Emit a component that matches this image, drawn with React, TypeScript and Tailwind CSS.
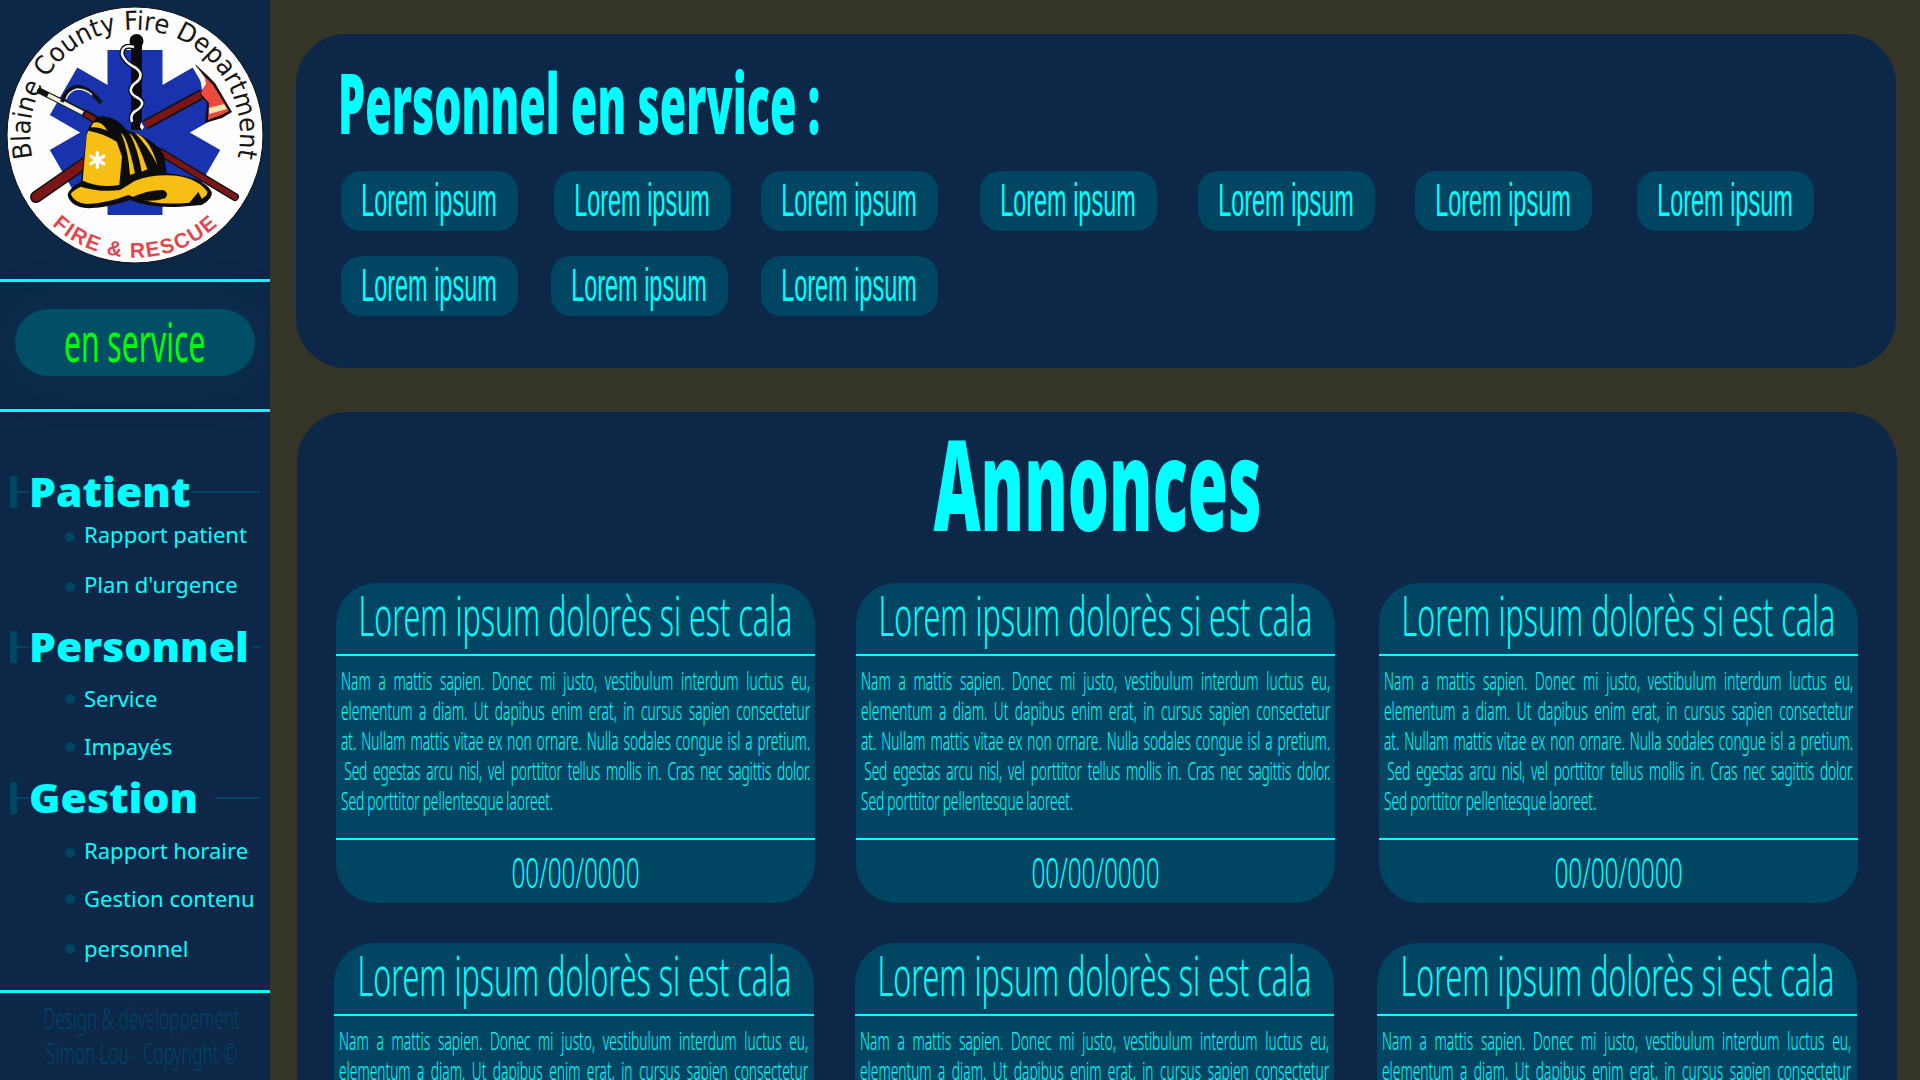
import React from "react";

function Logo() {
  return (
    <svg width="270" height="279" viewBox="0 0 270 279" className="block">
      <defs>
        <path id="arcTop" d="M32.6,158 A105,105 0 1 1 237.4,158" />
        <path id="arcBot" d="M52,225 A122,122 0 0 0 218,225" />
      </defs>
      <circle cx="135" cy="135" r="128" fill="#fdfdfd" stroke="#111" strokeWidth="1" />
      <text fontFamily="'DejaVu Sans', sans-serif" fontSize="26" fill="#161616">
        <textPath href="#arcTop" textLength="376" lengthAdjust="spacingAndGlyphs">Blaine County Fire Department</textPath>
      </text>
      <text fontFamily="'Liberation Sans', sans-serif" fontWeight="700" fontSize="21" fill="#e0474f">
        <textPath href="#arcBot" textLength="182" lengthAdjust="spacing">FIRE &amp; RESCUE</textPath>
      </text>
      <g fill="#1833ad">
        <rect x="107.5" y="50" width="55" height="165" />
        <rect x="107.5" y="50" width="55" height="165" transform="rotate(60 135 132.5)" />
        <rect x="107.5" y="50" width="55" height="165" transform="rotate(120 135 132.5)" />
      </g>
      {/* handles */}
      <path d="M145,125 L202,94" stroke="#111" strokeWidth="10" />
      <path d="M145,125 L202,94" stroke="#7c1616" strokeWidth="7" />
      <path d="M36,197 L85,163" stroke="#111" strokeWidth="12" strokeLinecap="round" />
      <path d="M36,197 L85,163" stroke="#7c1616" strokeWidth="9" strokeLinecap="round" />
      <path d="M160,152 L235,197" stroke="#111" strokeWidth="8" strokeLinecap="round" />
      <path d="M160,152 L235,197" stroke="#7c1616" strokeWidth="5.5" strokeLinecap="round" />
      {/* halligan */}
      <path d="M40,91 L84,113" stroke="#111" strokeWidth="6" strokeLinecap="round" />
      <path d="M48,95 L83,113" stroke="#f4efd6" strokeWidth="4" />
      <path d="M84,113 L103,124" stroke="#111" strokeWidth="8" />
      <path d="M85,114 L99,122" stroke="#7c1616" strokeWidth="4.5" />
      <path d="M62,102 Q66,89 76,87 Q88,86 101,103" fill="none" stroke="#111" strokeWidth="4" />
      <path d="M66,99 Q69,91 77,89 Q86,89 92,95" fill="none" stroke="#e8e8e8" strokeWidth="1.4" />
      {/* axe */}
      <path d="M195,64 L207,75 L215,83 L232,112 L222,118 L205,123 L207,103 L200,95 L205,83 Z" fill="#111" />
      <path d="M197,67 L205,82 L201,94 L209,103 L208,120 L221,115 L229,111 L213,85 L205,77 Z" fill="#ec4a3e" />
      <path d="M197,67 L205,78 L206,84 L202,90 L200,78 Z" fill="#f3f3f3" />
      <path d="M209,108 L224,104 L227,109 L209,114 Z" fill="#efe7b0" />
      {/* staff and snake */}
      <rect x="131" y="40" width="11" height="90" fill="#0b0b0b" />
      <circle cx="136.5" cy="41" r="7" fill="#0b0b0b" />
      <path d="M134,47 Q122,44 122,54 Q124,62 136,68 Q146,76 134,84 Q126,92 138,98 Q148,104 134,112 Q130,116 132,122" fill="none" stroke="#0b0b0b" strokeWidth="5" />
      <path d="M134,47 Q122,44 122,54 Q124,62 136,68 Q146,76 134,84 Q126,92 138,98 Q148,104 134,112 Q130,116 132,122" fill="none" stroke="#f4f4f4" strokeWidth="2.6" />
      <path d="M141,122 L144,127 L142,130 L140,127 Z" fill="#fff" />
      {/* helmet, drawn in 3x coordinates */}
      <g transform="translate(20 110) scale(0.33333)">
        <path d="M245,18 Q210,30 200,70 L183,215 Q145,235 143,255 Q150,290 205,295 Q270,292 330,270 Q390,295 480,290 L545,285 Q580,265 575,245 Q550,200 440,190 L432,135 Q410,90 320,60 Q290,20 245,18Z" fill="#0c0c0c" />
        <path d="M152,252 Q160,240 182,230 Q240,248 300,240 Q325,225 345,212 Q400,192 470,197 Q535,207 562,245 Q562,258 545,266 L535,246 L508,278 Q440,284 395,276 Q350,266 325,255 Q260,280 200,282 Q162,278 152,252Z" fill="#f7be14" />
        <path d="M330,265 Q380,240 430,240 Q450,250 435,265 Q390,280 330,265Z" fill="#0c0c0c" />
        <path d="M205,62 L200,75 L188,212 Q240,235 298,225 L306,140 L290,95 Q250,70 205,62Z" fill="#f7be14" />
        <path d="M220,38 Q245,30 262,62 Q235,50 212,52Z" fill="#f7be14" />
        <path d="M303,68 Q322,80 345,190 L330,195 Q325,120 303,68Z" fill="#f7be14" />
        <path d="M328,68 Q350,85 382,178 L365,185 Q355,120 328,68Z" fill="#f7be14" />
        <path d="M345,68 Q390,85 412,165 Q385,110 345,68Z" fill="#f7be14" />
        <g stroke="#fff" strokeWidth="10" strokeLinecap="round">
          <path d="M232,128 V172" />
          <path d="M213,139 L251,161" />
          <path d="M251,139 L213,161" />
        </g>
      </g>
    </svg>
  );
}

type Item = { t: string; m: string; x: string };
const items: Item[][] = [
  [
    { t: "Rapport patient", m: "mt-[14px]", x: "-mt-[4px]" },
    { t: "Plan d'urgence", m: "mt-[20px]", x: "-mt-[4px]" },
  ],
  [
    { t: "Service", m: "mt-[21px]", x: "" },
    { t: "Impayés", m: "mt-[18px]", x: "" },
  ],
  [
    { t: "Rapport horaire", m: "mt-[24px]", x: "-mt-[4px]" },
    { t: "Gestion contenu", m: "mt-[16px]", x: "" },
    { t: "personnel", m: "mt-[20px]", x: "" },
  ],
];

function Section({ title, top, right, list }: { title: string; top: string; right: string; list: Item[] }) {
  return (
    <div>
      <div className={`flex items-center h-[32px] ml-[10px] w-[250px] ${top}`}>
        <div className="w-[7px] h-[32px] bg-[#004662] shrink-0" />
        <div className="h-[2px] w-[12px] bg-[#004662] shrink-0" />
        <div className="origin-left scale-x-[1.04] -mt-[3px] font-['Open_Sans'] font-extrabold text-[41px] leading-[32px] text-[#00ffff] whitespace-nowrap">{title}</div>
        <div className={`h-[2px] bg-[#004662] ml-auto shrink-0 ${right}`} />
      </div>
      {list.map((it) => (
        <div key={it.t} className={`flex items-center h-[30px] pl-[65px] ${it.m}`}>
          <div className="w-[10px] h-[10px] rounded-full bg-[#004662] shrink-0" />
          <div className={`ml-[9px] origin-left scale-x-[1.05] font-['Noto_Sans'] text-[21px] leading-[30px] text-[#00ffff] whitespace-nowrap ${it.x}`}>{it.t}</div>
        </div>
      ))}
    </div>
  );
}

function Sidebar() {
  return (
    <aside className="w-[270px] shrink-0 h-[1080px] bg-[#0c2748] flex flex-col overflow-hidden">
      <div className="h-[279px] shrink-0"><Logo /></div>
      <div className="h-[3px] bg-[#00ffff] shrink-0" />
      <div className="h-[127px] shrink-0 flex items-center justify-center">
        <div className="w-[240px] h-[67px] mb-[6px] rounded-[34px] bg-[#004f66] flex items-center justify-center shadow-[0_0_50px_rgba(0,80,100,0.3)]">
          <span className="inline-block scale-x-[0.6] scale-y-[1.08] font-['Noto_Sans'] text-[50px] leading-[67px] text-[#00ff00] whitespace-nowrap">en service</span>
        </div>
      </div>
      <div className="h-[3px] bg-[#00ffff] shrink-0" />
      <nav className="h-[578px] shrink-0">
        <Section title="Patient" top="mt-[64px]" right="w-[68px]" list={items[0]} />
        <Section title="Personnel" top="mt-[29px]" right="w-[7px]" list={items[1]} />
        <Section title="Gestion" top="mt-[20px]" right="w-[45px]" list={items[2]} />
      </nav>
      <div className="h-[3px] bg-[#00ffff] shrink-0" />
      <div className="pl-[14px] pt-[7px] font-['Noto_Sans'] font-light text-[30px] leading-[35px] text-[#004662]">
        <div className="flex justify-center"><span className="inline-block scale-x-[0.57] whitespace-nowrap">Design &amp; développement</span></div>
        <div className="flex justify-center"><span className="inline-block scale-x-[0.57] whitespace-nowrap">Simon Lou - Copyright ©</span></div>
      </div>
    </aside>
  );
}

const row1 = ["ml-[45px]", "ml-[36px]", "ml-[30px]", "ml-[42px]", "ml-[41px]", "ml-[40px]", "ml-[45px]"];
const row2 = ["ml-[45px]", "ml-[33px]", "ml-[33px]"];

function Chip({ m }: { m: string }) {
  return (
    <div className={`w-[177px] h-[60px] rounded-[20px] bg-[#004662] flex items-center justify-center shrink-0 ${m}`}>
      <span className="inline-block -mt-[2px] -ml-[1px] scale-x-[0.51] font-['Liberation_Sans'] text-[46px] leading-[60px] text-[#00ffff] whitespace-nowrap">Lorem ipsum</span>
    </div>
  );
}

function Card({ w }: { w: string }) {
  return (
    <div className={`${w} h-[320px] shrink-0 rounded-[40px] bg-[#004662] overflow-hidden text-[#00ffff] font-['Noto_Sans'] font-light`}>
      <div className="h-[71px] flex justify-center">
        <span className="inline-block -mt-[1px] scale-x-[0.543] text-[56px] leading-[64px] whitespace-nowrap">Lorem ipsum dolorès si est cala</span>
      </div>
      <div className="h-[2px] bg-[#00ffff]" />
      <div className="h-[182px] pt-[9px] pl-[5px]">
        <div className="w-[853px] origin-top-left scale-x-[0.55] text-[25px] leading-[30px] [word-spacing:-0.12em]">
          <div className="[text-align-last:justify]">Nam a mattis sapien. Donec mi justo, vestibulum interdum luctus eu,</div>
          <div className="[text-align-last:justify]">elementum a diam. Ut dapibus enim erat, in cursus sapien consectetur</div>
          <div className="[text-align-last:justify]">at. Nullam mattis vitae ex non ornare. Nulla sodales congue isl a pretium.</div>
          <div className="pl-[6px] tracking-[-0.3px] [text-align-last:justify]">Sed egestas arcu nisl, vel porttitor tellus mollis in. Cras nec sagittis dolor.</div>
          <div className="[word-spacing:-0.05em]">Sed porttitor pellentesque laoreet.</div>
        </div>
      </div>
      <div className="h-[2px] bg-[#00ffff]" />
      <div className="h-[63px] flex items-center justify-center">
        <span className="inline-block scale-x-[0.58] text-[42px] leading-[63px] whitespace-nowrap">00/00/0000</span>
      </div>
    </div>
  );
}

export default function App() {
  return (
    <div className="w-[1920px] h-[1080px] overflow-hidden bg-[#343428] flex">
      <Sidebar />
      <main className="flex-1 h-[1080px] overflow-hidden">
        <section className="ml-[26px] mt-[34px] w-[1600px] h-[334px] rounded-[50px] bg-[#0c2748] overflow-hidden">
          <div className="h-[137px] pl-[42px] pt-[23px]">
            <div className="origin-left scale-x-[0.512] font-['Open_Sans'] font-extrabold text-[84px] leading-[90px] text-[#00ffff] whitespace-nowrap">Personnel en service :</div>
          </div>
          <div className="flex">{row1.map((m, i) => <Chip key={i} m={m} />)}</div>
          <div className="flex mt-[25px]">{row2.map((m, i) => <Chip key={i} m={m} />)}</div>
        </section>
        <section className="ml-[27px] mt-[44px] w-[1600px] h-[800px] rounded-[50px] bg-[#0c2748] overflow-hidden">
          <div className="h-[171px] flex justify-center">
            <span className="inline-block scale-x-[0.52] font-['Open_Sans'] font-extrabold text-[125px] leading-[142px] text-[#00ffff] whitespace-nowrap">Annonces</span>
          </div>
          <div className="flex pl-[39px]">
            <Card w="w-[479px]" />
            <div className="ml-[41px]"><Card w="w-[479px]" /></div>
            <div className="ml-[44px]"><Card w="w-[479px]" /></div>
          </div>
          <div className="flex pl-[37px] mt-[40px]">
            <Card w="w-[480px]" />
            <div className="ml-[41px]"><Card w="w-[479px]" /></div>
            <div className="ml-[43px]"><Card w="w-[480px]" /></div>
          </div>
        </section>
      </main>
    </div>
  );
}
